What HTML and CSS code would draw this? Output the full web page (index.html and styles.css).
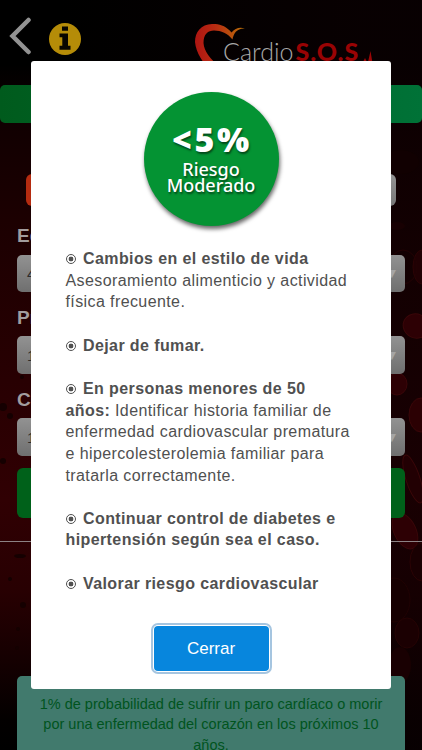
FILE: index.html
```html
<!DOCTYPE html>
<html lang="es">
<head>
    <meta charset="UTF-8">
    <meta name="viewport" content="width=device-width, initial-scale=1.0">
    <title>Cardio S.O.S</title>
    <link rel="stylesheet" href="styles.css">
</head>
<body>
    <svg class="fondo" viewBox="0 0 422 750">
        <g fill="#2d0004" stroke="#3a0609" stroke-width="1">
            <ellipse cx="422" cy="267" rx="9" ry="17" fill="#200003" stroke="#2b0305"/>
            <ellipse cx="403" cy="267" rx="14" ry="17" fill="none" stroke="#230204"/>
            <ellipse cx="416" cy="326" rx="13" ry="12" transform="rotate(25 416 326)"/>
            <ellipse cx="397" cy="384" rx="10" ry="11"/>
            <ellipse cx="421" cy="415" rx="12" ry="17" fill="#2b0003"/>
            <ellipse cx="413" cy="479" rx="7" ry="25" transform="rotate(-18 413 479)" fill="#220003"/>
            <ellipse cx="405" cy="531" rx="11" ry="19" transform="rotate(-25 405 531)"/>
            <ellipse cx="422" cy="562" rx="12" ry="19" fill="#190002" stroke="#2b0305"/>
            <ellipse cx="394" cy="600" rx="16" ry="22" fill="#160001" stroke="#200203"/>
            <ellipse cx="407" cy="633" rx="12" ry="15" fill="#1b0002" stroke="#250304"/>
            <ellipse cx="400" cy="665" rx="11" ry="18" fill="#190002" stroke="none"/>
            <ellipse cx="397" cy="226" rx="8" ry="4" fill="#180002" stroke="none"/>
            <ellipse cx="401" cy="162" rx="18" ry="12" fill="#110001" stroke="none"/>
        </g>
        <g fill="#150001">
            <circle cx="3" cy="407" r="4"/>
            <circle cx="10" cy="416" r="3"/>
            <circle cx="22" cy="377" r="2"/>
            <circle cx="3" cy="461" r="3"/>
            <ellipse cx="20" cy="556" rx="6" ry="2"/>
            <circle cx="10" cy="579" r="2"/>
            <circle cx="23" cy="605" r="3"/>
            <circle cx="18" cy="629" r="2"/>
            <circle cx="17" cy="648" r="2"/>
        </g>
    </svg>

    <div class="pagina">
        <header class="encabezado">
            <svg class="atras" width="24" height="38" viewBox="0 0 24 38">
                <path d="M20.5 3 L4.5 19 L20.5 35" fill="none" stroke="#929292" stroke-width="4.5" stroke-linecap="round" stroke-linejoin="miter"/>
            </svg>
            <svg class="info" width="32" height="32" viewBox="0 0 32 32">
                <circle cx="16" cy="16" r="16" fill="#b58c08"/>
                <path d="M13 3.5h6v4.2h-6z M10.5 10.5h8.5v12.3h2.5v4H10.5v-4h2.8v-8.5h-2.8z" fill="#080600"/>
            </svg>
            <div class="logo">
                <svg class="corazon" width="54" height="50" viewBox="0 0 54 50">
                    <defs>
                        <linearGradient id="fuego" x1="0" y1="0" x2="1" y2="0">
                            <stop offset="0" stop-color="#ae1512"/>
                            <stop offset=".4" stop-color="#b82b12"/>
                            <stop offset="1" stop-color="#b97108"/>
                        </linearGradient>
                    </defs>
                    <path d="M50 4.5 C45 2.5 40 4 36.5 8.5 C31 2 24 -.5 17 0 C6 .5 0 8 0 18 C1 29 8 39 17 48 L25 43 C15 35 9 27 8.5 19 C8.5 10 13 6.5 19 6.5 C26 6.5 33 9.5 37.5 15.5 C38.5 9.5 42 4 50 4.5z" fill="url(#fuego)"/>
                </svg>
                <span class="logo-cardio">Cardio</span>
                <span class="logo-sos">S.O.S</span>
                <svg class="pulso" width="14" height="20" viewBox="0 0 14 20">
                    <path d="M0 12 L2 8 L4 12 L5 12 L7.5 1 L10.5 19 H0z" fill="#9b0506"/>
                </svg>
            </div>
        </header>

        <div class="barra"></div>

        <form class="formulario">
            <div class="genero">
                <span class="genero-activo"></span>
                <span class="genero-inactivo"></span>
            </div>
            <label>Edad</label>
            <div class="selector"><span>40</span><i>&#9660;</i></div>
            <label>Presión</label>
            <div class="selector"><span>120</span><i>&#9660;</i></div>
            <label>Colesterol</label>
            <div class="selector"><span>150</span><i>&#9660;</i></div>
            <div class="calcular"></div>
        </form>

        <div class="linea"></div>

        <div class="resultado">1% de probabilidad de sufrir un paro cardíaco o morir por una enfermedad del corazón en los próximos 10 años.</div>
    </div>

    <div class="modal">
        <div class="riesgo">
            <span class="riesgo-valor">&lt;5%</span>
            <span class="riesgo-texto">Riesgo</span>
            <span class="riesgo-texto">Moderado</span>
        </div>
        <div class="consejos">
            <p><span class="punto"></span><b>Cambios en el estilo de vida</b><br>Asesoramiento alimenticio y actividad<br>física frecuente.</p>
            <p><span class="punto"></span><b>Dejar de fumar.</b></p>
            <p><span class="punto"></span><b>En personas menores de 50<br>años:</b> Identificar historia familiar de<br>enfermedad cardiovascular prematura<br>e hipercolesterolemia familiar para<br>tratarla correctamente.</p>
            <p><span class="punto"></span><b>Continuar control de diabetes e<br>hipertensión según sea el caso.</b></p>
            <p><span class="punto"></span><b>Valorar riesgo cardiovascular</b></p>
        </div>
        <button class="cerrar">Cerrar</button>
    </div>
</body>
</html>
```

FILE: styles.css
```css
* {
    box-sizing: border-box;
    margin: 0;
    padding: 0;
}

body {
    position: relative;
    width: 422px;
    height: 750px;
    overflow: hidden;
    font-family: "Liberation Sans", Arial, sans-serif;
    background: linear-gradient(to right, transparent 60px, rgba(12, 0, 2, 0.65) 360px),
        linear-gradient(#000 0, #000 65px, #110001 125px, #1c0001 220px, #280002 380px, #300003 500px, #280002 590px, #150001 660px, #030000 720px, #000 750px);
}

.fondo {
    position: absolute;
    top: 0;
    left: 0;
    width: 422px;
    height: 750px;
}

.pagina {
    position: relative;
    display: flex;
    flex-direction: column;
    height: 750px;
}

/* encabezado */
.encabezado {
    display: flex;
    align-items: flex-start;
    height: 84.5px;
    flex-shrink: 0;
    padding: 17px 0 0 8px;
}

.info {
    margin: 6px 0 0 17px;
}

.logo {
    position: relative;
    display: flex;
    align-items: flex-start;
    margin: 7px 0 0 114px;
    line-height: 24px;
}

.corazon {
    margin-right: -26px;
}

.logo-cardio {
    margin-top: 15px;
    font-family: Lato, sans-serif;
    font-weight: 300;
    font-size: 25px;
    color: #a8a8a8;
}

.logo-sos {
    margin: 15px 0 0 2px;
    font-family: Lato, sans-serif;
    font-weight: 900;
    font-size: 25px;
    letter-spacing: 1px;
    color: #990304;
}

.pulso {
    margin: 26px 0 0 4px;
}

.barra {
    flex-shrink: 0;
    height: 38px;
    border-radius: 5px;
    background: linear-gradient(to right, #005b1d, #007237);
}

/* formulario */
.formulario {
    display: flex;
    flex-direction: column;
    padding: 51px 17px 0;
}

.genero {
    display: flex;
    height: 32px;
    margin: 0 9px;
    border-radius: 6px;
    overflow: hidden;
}

.genero span {
    flex: 1;
}

.genero-activo {
    background: #b52b10;
}

.genero-inactivo {
    background: linear-gradient(#949494, #777);
}

.formulario label {
    height: 44.2px;
    padding-top: 15px;
    font-size: 19px;
    font-weight: bold;
    line-height: 22px;
    color: #a29c9d;
}

.genero + label {
    height: 49px;
    padding-top: 19px;
}

.selector {
    display: flex;
    justify-content: space-between;
    align-items: center;
    height: 37.8px;
    padding: 0 9px 0 10px;
    border-radius: 5px;
    font-size: 15px;
    color: #2c2c2c;
    background: linear-gradient(#929292, #6f6f6f);
}

.selector i {
    font-family: "DejaVu Sans", sans-serif;
    font-size: 11px;
    font-style: normal;
    color: #a5a5a5;
}

.calcular {
    height: 50.5px;
    margin-top: 11.5px;
    border-radius: 6px;
    background: #00611a;
}

.linea {
    flex-shrink: 0;
    height: 1px;
    margin-top: 22.5px;
    background: #8c8284;
}

.resultado {
    height: 100px;
    flex-shrink: 0;
    margin: 134px 17px 0;
    padding: 18px 18px 0;
    border-radius: 5px;
    font-size: 14.5px;
    line-height: 20.4px;
    text-align: center;
    color: #00541e;
    background: #417a6d;
}

/* ventana modal */
.modal {
    position: absolute;
    top: 61px;
    left: 31px;
    width: 360px;
    height: 627.5px;
    padding: 31px 34.5px 0;
    display: flex;
    flex-direction: column;
    align-items: center;
    border-radius: 3px;
    background: #fff;
}

.riesgo {
    display: flex;
    flex-direction: column;
    align-items: center;
    width: 135px;
    height: 134px;
    padding-top: 29px;
    border-radius: 50%;
    color: #fff;
    background: #049333;
    box-shadow: 1px 3px 4px rgba(0, 0, 0, 0.6);
    font-family: "Open Sans", "Noto Sans", sans-serif;
    text-shadow: 1px 2px 2px rgba(0, 0, 0, 0.5);
}

.riesgo-valor {
    margin: 0 0 4px 2px;
    font-size: 34px;
    font-weight: 800;
    line-height: 36px;
    letter-spacing: 2.6px;
}

.riesgo-texto {
    font-family: "Noto Sans", sans-serif;
    font-size: 18px;
    font-weight: 500;
    line-height: 16px;
}

.consejos {
    display: flex;
    flex-direction: column;
    gap: 21.65px;
    width: 100%;
    margin-top: 22px;
    font-size: 16px;
    line-height: 21.65px;
    letter-spacing: 0.4px;
    white-space: nowrap;
    color: #505050;
}

.punto {
    display: inline-block;
    width: 10px;
    height: 10px;
    margin: 0 7px 0 0.5px;
    border: 1px solid #505050;
    border-radius: 50%;
    background: radial-gradient(circle, #505050 2.1px, transparent 2.7px);
}

.cerrar {
    width: 115px;
    height: 45px;
    margin-top: 32px;
    border: none;
    border-radius: 4px;
    font-family: inherit;
    font-size: 17px;
    color: #fff;
    background: #0786dd;
    box-shadow: 0 0 0 1px #fff, 0 0 0 3px #a5c5e0;
}
```
